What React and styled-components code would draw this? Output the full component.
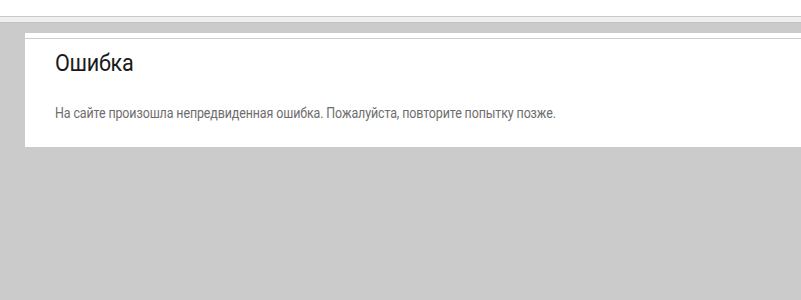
import styled, { createGlobalStyle } from "styled-components";

const GlobalStyle = createGlobalStyle`
  html, body {
    margin: 0;
    padding: 0;
    background-color: #cbcbcb;
    font-family: Roboto, "Liberation Sans", sans-serif;
  }
`;

export const TopBar = styled.div`
  height: 16px;
  background-color: #ffffff;
  border-bottom: 1px solid #c9c9c9;
`;

export const Strip = styled.div`
  height: 5px;
  background-color: #efefef;
  border-bottom: 1px solid #c2c2c2;
`;

export const Main = styled.main`
  padding: 10px 0 0 25px;
`;

export const Card = styled.section`
  background-color: #ffffff;
  padding-top: 5px;
  height: 109px;
`;

export const CardBody = styled.div`
  border-top: 1px solid #cfcfcf;
  padding: 10px 30px 0;
`;

// the original uses a narrow face; squeeze Roboto to match
export const Title = styled.h1`
  margin: 0;
  font-size: 24px;
  font-weight: 400;
  color: #1a1a1a;
  letter-spacing: -0.3px;
  transform: scaleX(0.9);
  transform-origin: left center;
`;

export const Message = styled.p`
  margin: 28px 0 0;
  font-size: 14px;
  color: #6d6d6d;
  letter-spacing: -0.13px;
  white-space: nowrap;
  transform: scaleX(0.89);
  transform-origin: left center;
`;

const App = () => {
  return (
    <>
      <GlobalStyle />
      <TopBar />
      <Strip />
      <Main>
        <Card>
          <CardBody>
            <Title>Ошибка</Title>
            <Message>
              На сайте произошла непредвиденная ошибка. Пожалуйста, повторите
              попытку позже.
            </Message>
          </CardBody>
        </Card>
      </Main>
    </>
  );
};

export default App;
